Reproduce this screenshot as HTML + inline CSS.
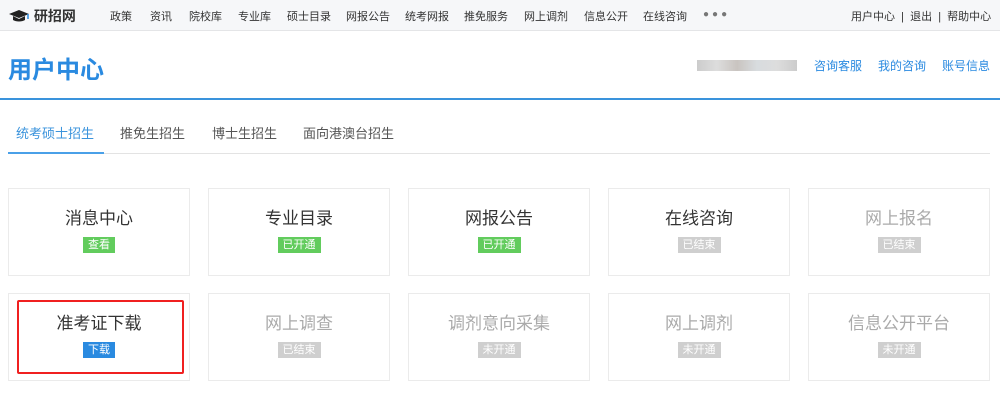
<!DOCTYPE html>
<html><head><meta charset="utf-8"><style>
body{margin:0;width:1000px;height:401px;background:#fff;font-family:"Liberation Sans","Noto Sans CJK SC",sans-serif;position:relative;overflow:hidden}
.top{position:absolute;left:0;top:0;width:1000px;height:30px;background:#f6f7f9;border-bottom:1px solid #e4e5e7}
.top span{position:absolute;top:8px;font-size:11px;color:#333;white-space:nowrap}
.logo{position:absolute;left:8px;top:6px;font-size:14px;font-weight:bold;color:#333}
.h1{position:absolute;left:8px;top:50px;font-size:24px;font-weight:bold;color:#2a8ae0}
.rl{position:absolute;top:57px;font-size:12px;color:#2a8ae0}
.blur{position:absolute;left:697px;top:60px;width:100px;height:11px;background:linear-gradient(90deg,#ccc,#ddd,#c9c4c0,#d8dcdf,#ddd,#ccc)}
.bl{position:absolute;left:0;top:98px;width:1000px;height:2px;background:#3a93dc}
.tab{position:absolute;top:123px;font-size:13px;color:#555}
.tl{position:absolute;left:8px;top:153px;width:982px;height:1px;background:#e3e3e3}
.tu{position:absolute;left:8px;top:152px;width:96px;height:2px;background:#4aa0e8}
.card{position:absolute;width:180px;height:86px;border:1px solid #ebebeb;text-align:center}
.card .t{margin-top:20px;font-size:17px;color:#333;line-height:20px}
.card .b{display:inline-block;margin-top:8px;font-size:11px;color:#fff;padding:0 5px;line-height:16px}
.g{background:#62cc5d}.gr{background:#cfcfcf}.bu{background:#2a8ae0}
.dim .t{color:#aaa}
</style></head><body>
<div class="top">
<div class="logo"><svg width="22" height="14" viewBox="0 0 22 14" style="vertical-align:-2px"><path d="M1 5L11 1L21 5L11 9Z" fill="#222"/><path d="M5 7v4c3 2 9 2 12 0V7l-6 3z" fill="#222"/><path d="M20 5v5" stroke="#2a8ae0" stroke-width="1.5"/></svg> 研招网</div>
<span style="left:110px">政策</span><span style="left:150px">资讯</span><span style="left:189px">院校库</span><span style="left:238px">专业库</span><span style="left:287px">硕士目录</span><span style="left:346px">网报公告</span><span style="left:405px">统考网报</span><span style="left:464px">推免服务</span><span style="left:524px">网上调剂</span><span style="left:584px">信息公开</span><span style="left:643px">在线咨询</span><span style="left:703px;top:9px;letter-spacing:3px;font-size:10px;color:#777">●●●</span>
<span style="left:851px">用户中心 &nbsp;| &nbsp;退出 &nbsp;| &nbsp;帮助中心</span>
</div>
<div class="h1">用户中心</div>
<div class="blur"></div>
<span class="rl" style="left:814px">咨询客服</span><span class="rl" style="left:878px">我的咨询</span><span class="rl" style="left:942px">账号信息</span>
<div class="bl"></div>
<span class="tab" style="left:16px;color:#3a93dc">统考硕士招生</span><span class="tab" style="left:120px">推免生招生</span><span class="tab" style="left:212px">博士生招生</span><span class="tab" style="left:303px">面向港澳台招生</span>
<div class="tl"></div><div class="tu"></div>
<div class="card" style="left:8px;top:188px"><div class="t">消息中心</div><span class="b g">查看</span></div>
<div class="card" style="left:208px;top:188px"><div class="t">专业目录</div><span class="b g">已开通</span></div>
<div class="card" style="left:408px;top:188px"><div class="t">网报公告</div><span class="b g">已开通</span></div>
<div class="card" style="left:608px;top:188px"><div class="t">在线咨询</div><span class="b gr">已结束</span></div>
<div class="card dim" style="left:808px;top:188px"><div class="t">网上报名</div><span class="b gr">已结束</span></div>
<div class="card" style="left:8px;top:293px"><div class="t">准考证下载</div><span class="b bu">下载</span></div>
<div class="card dim" style="left:208px;top:293px"><div class="t">网上调查</div><span class="b gr">已结束</span></div>
<div class="card dim" style="left:408px;top:293px"><div class="t">调剂意向采集</div><span class="b gr">未开通</span></div>
<div class="card dim" style="left:608px;top:293px"><div class="t">网上调剂</div><span class="b gr">未开通</span></div>
<div class="card dim" style="left:808px;top:293px"><div class="t">信息公开平台</div><span class="b gr">未开通</span></div>
<div style="position:absolute;left:17px;top:300px;width:163px;height:70px;border:2px solid #f02020;border-radius:2px"></div>
</body></html>
